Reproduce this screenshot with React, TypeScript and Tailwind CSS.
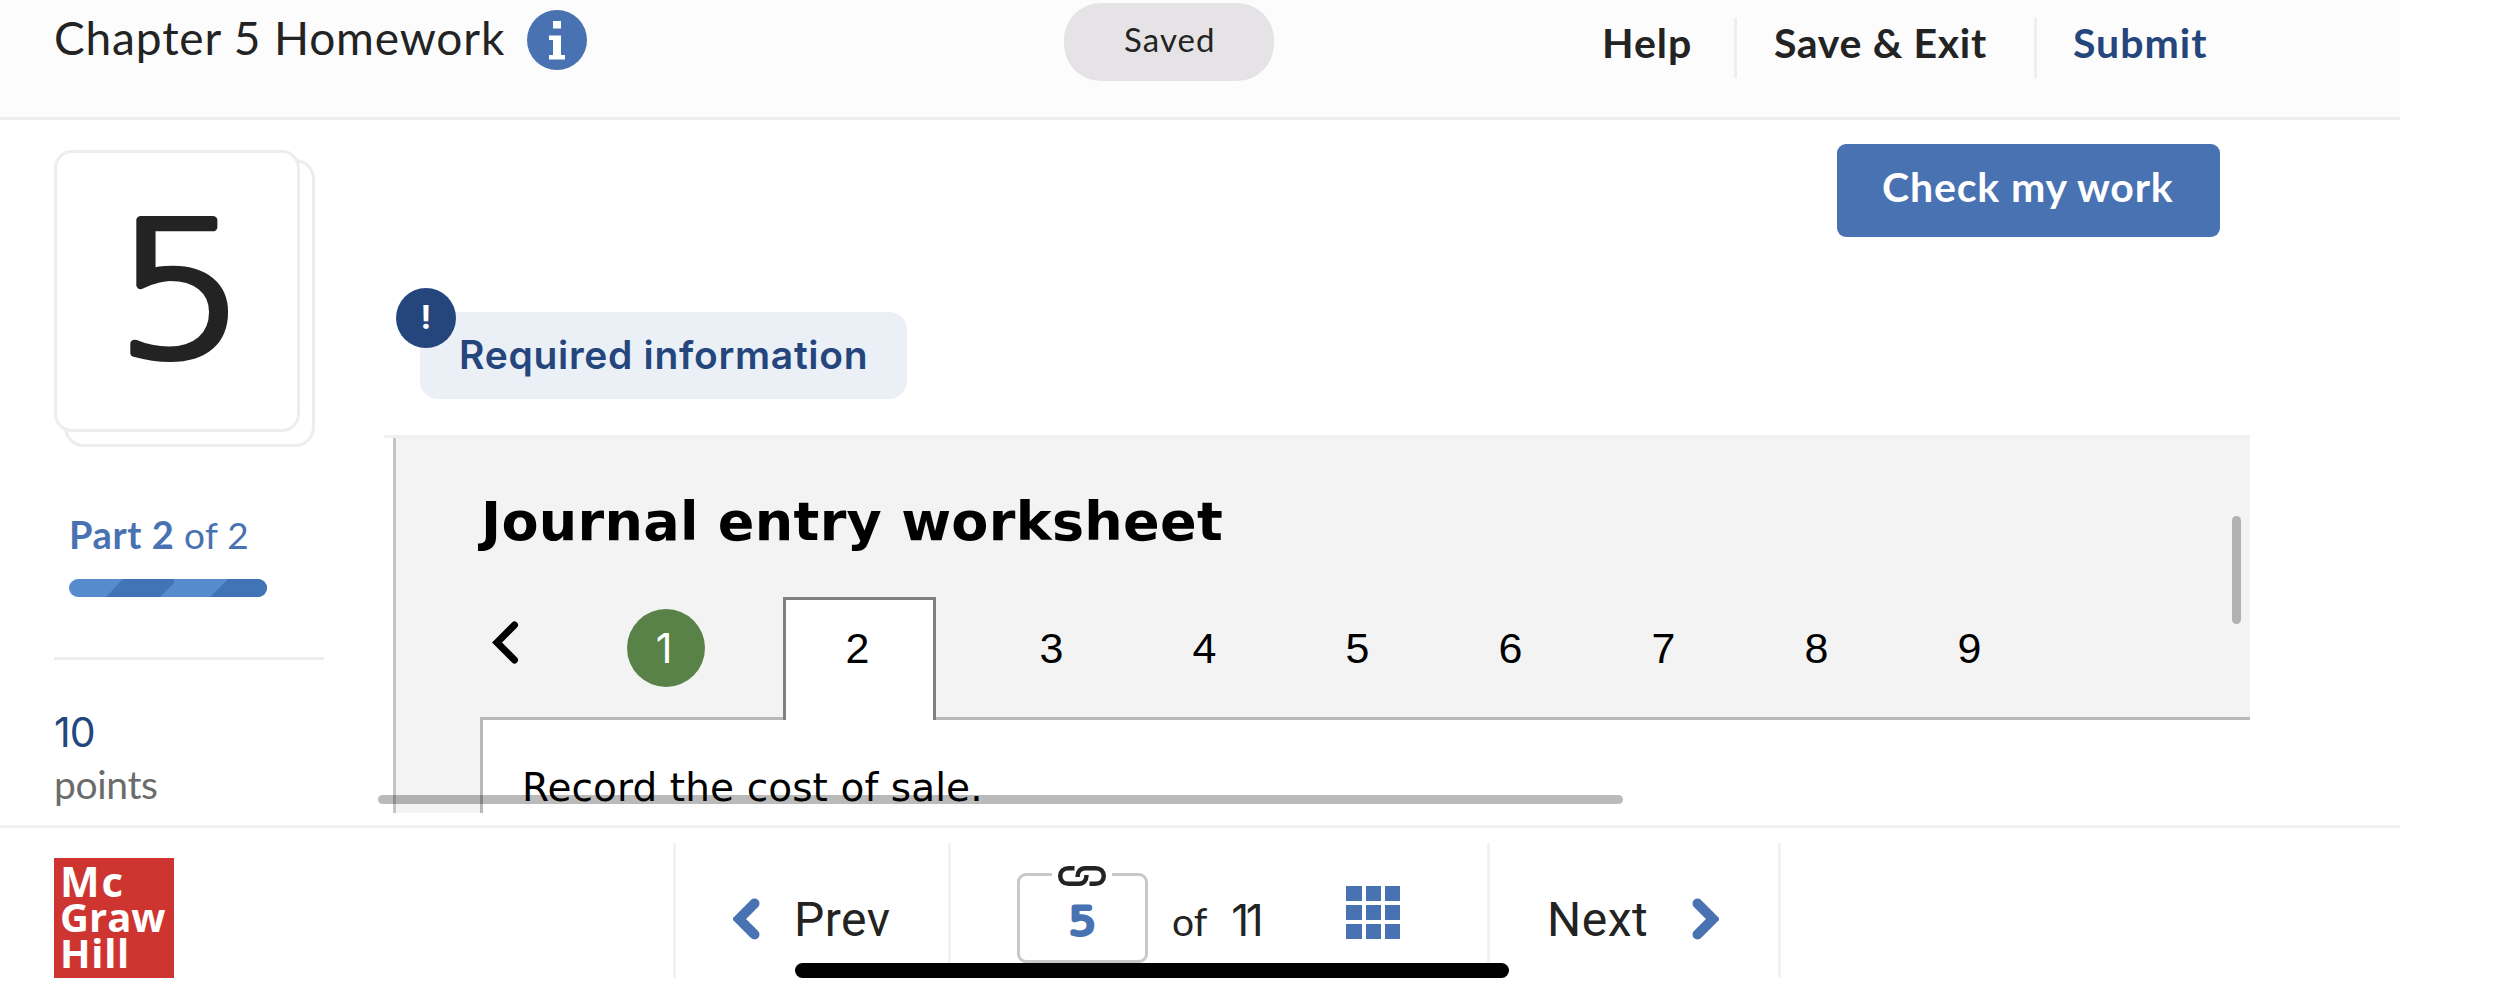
import React from "react";

const TABS = ["3", "4", "5", "6", "7", "8", "9"];
const CELLS = [0, 1, 2, 3, 4, 5, 6, 7, 8];

function InfoIcon() {
  return (
    <svg className="mt-[10px] size-[60px] shrink-0" viewBox="0 0 60 60" aria-label="Info">
      <circle cx="30" cy="30" r="30" fill="#4872b1" />
      <path d="M26 11h8v7.5h-8zM22 25.500h12v19.500h4v4.500H22V45h4V30h-4z" fill="#fff" />
    </svg>
  );
}

function Chevron({ flip = false }: { flip?: boolean }) {
  return (
    <svg className="mt-[55px] h-[42px] w-[27px] shrink-0" viewBox="0 0 27 42">
      <path
        d={flip ? "M5.500 5.500 21 21 5.500 36.500" : "M21.500 5.500 6 21 21.500 36.500"}
        fill="none"
        stroke="#4872b1"
        strokeWidth="10"
        strokeLinecap="round"
        strokeLinejoin="miter"
      />
    </svg>
  );
}

function LinkIcon() {
  return (
    <svg className="h-5 w-12" viewBox="0 0 48 20" fill="none" stroke="#232323" strokeWidth="4.5">
      <path d="M16.500 2.250H10.500C5.500 2.250 2.250 5.500 2.250 10s3.250 7.750 8.250 7.750h10.500c4.500 0 7.500-3 7.500-8.750" />
      <path d="M31.500 17.750h6c5 0 8.250-3.250 8.250-7.750s-3.250-7.750-8.250-7.750H27c-4.500 0-7.500 3-7.500 8.750" />
    </svg>
  );
}

function Header() {
  return (
    <header className="flex h-[120px] w-[2400px] items-start border-b-[3px] border-[#efefef] bg-[#fcfcfc] pl-[54px] text-[#232323]">
      <h1 className="mt-[11px] w-[473px] shrink-0 whitespace-nowrap text-[46px] leading-[54px] tracking-[0.85px]">
        Chapter 5 Homework
      </h1>
      <InfoIcon />
      <div className="ml-[477px] mt-[3px] h-[78px] w-[210px] shrink-0 rounded-[37px] bg-[#e5e3e6] pl-[60px] pt-[17px] text-[33px] leading-[39px] tracking-[1.1px]">
        Saved
      </div>
      <nav className="ml-[328px] flex items-start whitespace-nowrap text-[41px] font-bold leading-[46px]">
        <a className="mt-[20px] w-[132px] tracking-[1px]">Help</a>
        <span className="mt-[18px] h-[60px] w-[3px] bg-[#efefef]" />
        <a className="ml-[37px] mt-[20px] w-[260px] tracking-[0.65px]">Save &amp; Exit</a>
        <span className="mt-[18px] h-[60px] w-[3px] bg-[#efefef]" />
        <a className="ml-[36px] mt-[20px] tracking-[1px] text-[#24467d]">Submit</a>
      </nav>
    </header>
  );
}

function Sidebar() {
  return (
    <aside className="w-[384px] shrink-0 pl-[54px]">
      <div className="relative mt-[30px] h-[282px] w-[246px]">
        <div className="absolute left-[10px] top-[9px] h-[288px] w-[251px] rounded-[20px] border-[3px] border-[#ededed]" />
        <div className="relative size-full rounded-[18px] border-[3px] border-[#ededed] bg-white">
          <svg className="size-full" viewBox="0 0 240 276">
            <text
              transform="translate(123.500 202) scale(1.12 1)"
              textAnchor="middle"
              className="fill-[#232323] stroke-[#232323] font-['DejaVu_Sans',sans-serif] text-[186px] font-extralight"
              strokeWidth="8"
              strokeLinejoin="round"
            >
              5
            </text>
          </svg>
        </div>
      </div>
      <div className="ml-[15px] mt-[80px] flex text-[37px] leading-[45px] text-[#4872b1]">
        <span className="w-[115px] text-[38px] font-bold tracking-[0.6px]">Part 2</span>
        <span className="tracking-[0.33px]">of 2</span>
      </div>
      <svg className="ml-[15px] mt-[22px] h-[18px] w-[198px] rounded-full" viewBox="0 0 198 18">
        <path d="M0 0h198v18H0z" fill="#568bcd" />
        <path d="M54 0h51v4L91 18H37zM159 0h39v18h-57z" fill="#4074b7" />
      </svg>
      <div className="mt-[60px] h-[3px] w-[270px] bg-[#ededed]" />
      <div className="mt-[47px] font-[Inter,sans-serif] text-[41px] leading-[50px] tracking-[-1px] text-[#24467d]">10</div>
      <div className="mt-[4px] text-[39px] leading-[46px] tracking-[-0.36px] text-[#6b6b6b]">points</div>
    </aside>
  );
}

function Worksheet() {
  return (
    <div className="mt-[36px] w-[1866px] border-t-[3px] border-[#f0f0f0]">
      <div className="relative">
        <div className="ml-[9px] h-[375px] overflow-hidden border-l-[3px] border-[#c4c4c4] bg-[#f3f3f3] text-black">
          <h2 className="whitespace-nowrap pl-[85px] pt-[52px] font-['DejaVu_Sans',sans-serif] text-[54px] font-bold leading-[63px] tracking-[0.3px]">
            Journal entry worksheet
          </h2>
          <div className="ml-[84px] mt-[44px] flex h-[120px] items-start text-center font-['Liberation_Sans',sans-serif] text-[43px] leading-[48px]">
            <svg className="ml-[12px] mt-[24px] h-[43px] w-[27px] shrink-0" viewBox="0 0 27 43">
              <path d="M22.500 4 5 21.500 22.500 39" fill="none" stroke="#000" strokeWidth="7" strokeLinecap="round" />
            </svg>
            <div className="ml-[108px] mt-[12px] flex size-[78px] shrink-0 items-center justify-center rounded-full bg-[#588248] pr-[4px] font-[Inter,sans-serif] text-[41px] text-white">
              1
            </div>
            <div className="relative ml-[78px] mr-[39px] h-[123px] w-[153px] shrink-0 border-x-[3px] border-t-[3px] border-[#808080] bg-white pr-[4px] pt-[24px]">
              2
            </div>
            {TABS.map((tab) => (
              <div key={tab} className="w-[153px] shrink-0 pt-[27px]">
                {tab}
              </div>
            ))}
          </div>
          <div className="ml-[84px] h-[120px] border-l-[3px] border-t-[3px] border-[#b8b8b8] bg-white pl-[39px] pt-[45px] font-['DejaVu_Sans',sans-serif] text-[39px] leading-[45px] tracking-[0.1px]">
            Record the cost of sale.
          </div>
        </div>
        <div className="absolute right-[9px] top-[78px] h-[108px] w-[9px] rounded-full bg-black/27" />
        <div className="absolute -left-[6px] top-[357px] h-[9px] w-[1245px] rounded-full bg-black/27" />
      </div>
    </div>
  );
}

function Question() {
  return (
    <section className="w-[1866px]">
      <div className="flex justify-end pr-[30px] pt-[24px]">
        <button className="flex h-[93px] w-[383px] items-start whitespace-nowrap rounded-[9px] bg-[#4872b1] pl-[45px] pt-[20px] text-[41px] font-bold leading-[46px] tracking-[0.85px] text-white">
          Check my work
        </button>
      </div>
      <div className="relative ml-[36px] mt-[75px] h-[87px] w-[487px] whitespace-nowrap rounded-[18px] bg-[#ebf0f7] pl-[39px] pt-[20px] font-[Inter,sans-serif] text-[39px] font-semibold leading-[46px] tracking-[0.7px] text-[#24467d]">
        Required information
        <span className="absolute -left-[24px] -top-[24px] flex size-[60px] items-center justify-center rounded-full bg-[#24467d] text-[32px] font-bold leading-[60px] tracking-normal text-white">
          !
        </span>
      </div>
      <Worksheet />
    </section>
  );
}

function Footer() {
  return (
    <footer className="relative flex h-[177px] w-[2400px] items-start border-t-[3px] border-[#f2f2f2] pl-[54px] text-[#232323]">
      <div className="mt-[30px] h-[120px] w-[120px] shrink-0 bg-[#cf3530] pt-[5px] font-['Open_Sans',sans-serif] text-[40px] font-bold leading-[36px] text-white">
        <div className="pl-[6px] text-[42px] tracking-[2px]">Mc</div>
        <div className="pl-[6px]">Graw</div>
        <div className="pl-[6px] tracking-[0.66px]">Hill</div>
      </div>
      <div className="ml-[499px] mt-[15px] flex h-[135px] w-[278px] items-start border-x-[3px] border-[#f2f2f2] pl-[57px]">
        <Chevron />
        <span className="ml-[34px] mt-[48px] font-[Roboto,sans-serif] text-[48px] leading-[57px] tracking-[0.5px]">Prev</span>
      </div>
      <div className="mt-[15px] flex h-[135px] w-[536px] items-start">
        <div className="relative ml-[66px] mt-[30px] h-[90px] w-[131px] rounded-[9px] border-[3px] border-[#c8c8c8]">
          <svg className="size-full" viewBox="0 0 125 84">
            <text
              transform="translate(62.500 58) scale(1.15 1)"
              textAnchor="middle"
              className="fill-[#4872b1] stroke-[#4872b1] font-['DejaVu_Sans',sans-serif] text-[37px] font-extralight"
              strokeWidth="5"
              strokeLinejoin="round"
            >
              5
            </text>
          </svg>
          <span className="absolute left-[32px] -top-[10px] flex w-[60px] justify-center bg-white">
            <LinkIcon />
          </span>
        </div>
        <span className="ml-[24px] mt-[55px] text-[39px] leading-[46px]">of</span>
        <span className="ml-[24px] mt-[50px] w-[60px] font-[Inter,sans-serif] text-[44px] leading-[54px] tracking-[-3.5px]">11</span>
        <div className="ml-[55px] mt-[43px] grid h-[53px] w-[54px] grid-cols-3 grid-rows-3 gap-[4px]">
          {CELLS.map((cell) => (
            <span key={cell} className="bg-[#4872b1]" />
          ))}
        </div>
      </div>
      <div className="mt-[15px] flex h-[135px] w-[294px] items-start border-x-[3px] border-[#f2f2f2] pl-[57px]">
        <span className="mt-[48px] w-[145px] font-[Roboto,sans-serif] text-[48px] leading-[57px] tracking-[0.5px]">Next</span>
        <Chevron flip />
      </div>
      <div className="absolute left-[795px] top-[135px] h-[15px] w-[714px] rounded-full bg-black" />
    </footer>
  );
}

export default function App() {
  return (
    <div className="h-[1002px] w-[2513px] overflow-hidden bg-white font-[Lato,sans-serif]">
      <Header />
      <main className="flex h-[705px]">
        <Sidebar />
        <Question />
      </main>
      <Footer />
    </div>
  );
}
